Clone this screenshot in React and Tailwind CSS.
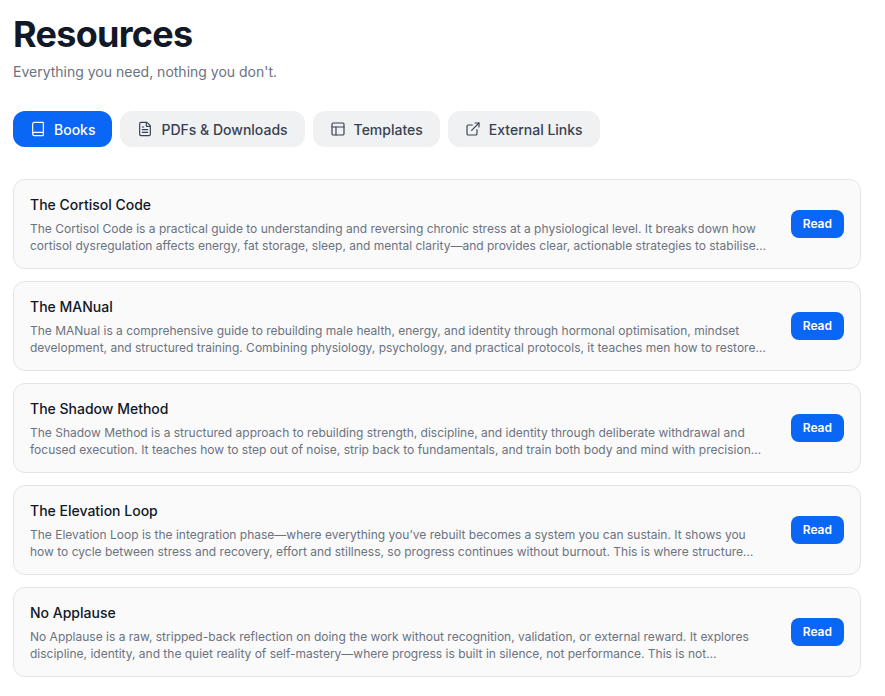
import { Book, FileText, Layout, ExternalLink } from "lucide-react";

const books = [
  ["The Cortisol Code", "The Cortisol Code is a practical guide to understanding and reversing chronic stress at a physiological level. It breaks down how cortisol dysregulation affects energy, fat storage, sleep, and mental clarity—and provides clear, actionable strategies to stabilise hormones and restore balance."],
  ["The MANual", "The MANual is a comprehensive guide to rebuilding male health, energy, and identity through hormonal optimisation, mindset development, and structured training. Combining physiology, psychology, and practical protocols, it teaches men how to restore drive and purpose."],
  ["The Shadow Method", "The Shadow Method is a structured approach to rebuilding strength, discipline, and identity through deliberate withdrawal and focused execution. It teaches how to step out of noise, strip back to fundamentals, and train both body and mind with precision—away from distraction."],
  ["The Elevation Loop", "The Elevation Loop is the integration phase—where everything you’ve rebuilt becomes a system you can sustain. It shows you how to cycle between stress and recovery, effort and stillness, so progress continues without burnout. This is where structure becomes identity."],
  ["No Applause", "No Applause is a raw, stripped-back reflection on doing the work without recognition, validation, or external reward. It explores discipline, identity, and the quiet reality of self-mastery—where progress is built in silence, not performance. This is not motivation. It is a record of what remains when no one is watching."],
];

const tabs = [
  [Book, "Books", true],
  [FileText, "PDFs & Downloads"],
  [Layout, "Templates"],
  [ExternalLink, "External Links"],
];

export default function App() {
  return (
    <div className="min-h-screen bg-white px-[13px] pt-[12px] font-[family-name:Inter,sans-serif] text-[#111827]">
      <h1 className="text-[36px] font-bold leading-[44px] tracking-[-0.02em]">Resources</h1>
      <p className="mt-[6px] text-[14px] leading-5 text-[#6b7280]">Everything you need, nothing you don't.</p>

      <div className="mt-[29px] flex gap-2">
        {tabs.map(([Icon, label, active]) => (
          <button
            key={label}
            className={
              "flex h-9 items-center gap-2 rounded-xl px-[17px] text-[14px] font-medium " +
              (active ? "bg-[#0a66f5] text-white" : "bg-[#f0f1f3] text-[#374151]")
            }
          >
            <Icon className="h-4 w-4" strokeWidth={1.75} />
            {label}
          </button>
        ))}
      </div>

      <div className="mt-8 flex w-[848px] flex-col gap-3">
        {books.map(([title, desc]) => (
          <div key={title} className="flex h-[90px] items-center gap-5 rounded-xl border border-[#e2e4e8] bg-[#fafafa] px-4">
            <div className="min-w-0 flex-1">
              <h3 className="text-[14px] font-medium leading-5 text-[#111827]">{title}</h3>
              <p className="mt-[5px] line-clamp-2 text-[12px] leading-[17px] text-[#6b7280]">{desc}</p>
            </div>
            <button className="h-7 shrink-0 rounded-lg bg-[#0a66f5] px-3 text-[12px] font-semibold text-white">Read</button>
          </div>
        ))}
      </div>
    </div>
  );
}
